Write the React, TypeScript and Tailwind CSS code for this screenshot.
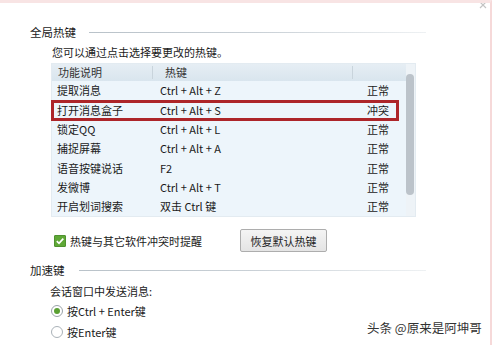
import React from "react";

const rows: { name: string; key: string; status: string; hot?: boolean }[] = [
  { name: "提取消息", key: "Ctrl + Alt + Z", status: "正常" },
  { name: "打开消息盒子", key: "Ctrl + Alt + S", status: "冲突", hot: true },
  { name: "锁定QQ", key: "Ctrl + Alt + L", status: "正常" },
  { name: "捕捉屏幕", key: "Ctrl + Alt + A", status: "正常" },
  { name: "语音按键说话", key: "F2", status: "正常" },
  { name: "发微博", key: "Ctrl + Alt + T", status: "正常" },
  { name: "开启划词搜索", key: "双击 Ctrl 键", status: "正常" },
];

export default function App() {
  return (
    <div
      className="relative w-[492px] h-[345px] overflow-hidden bg-white border-t-[3px] border-t-[#f8e4e4] border-r-2 border-r-[#f6d9d9] text-[11px] leading-[14px] text-[#1a1a1a]"
      style={{ fontFamily: '"Noto Sans CJK SC", "Noto Sans", sans-serif' }}
    >
      <svg className="absolute right-[3px] top-[-2px]" width="8" height="8" viewBox="0 0 8 8">
        <path d="M1 1 L7 7 M7 1 L1 7" stroke="#c4c4c4" strokeWidth="1.2" />
      </svg>

      {/* 全局热键 header */}
      <div className="mt-[22px] flex items-center pl-[30px]">
        <span className="text-[11.5px]">全局热键</span>
        <div className="ml-[13px] h-px w-[337px] bg-gradient-to-r from-[#b9c2c9] via-[#c9d0d6] to-[#eef1f3]" />
      </div>

      <div className="mt-[6px] pl-[52px] text-[11px]">您可以通过点击选择要更改的热键。</div>

      {/* table */}
      <div className="mt-[4px] ml-[51px] flex h-[154px] w-[365px] bg-[#edf5fb] border border-[#e3ebf1]">
        <div className="flex w-[355px] flex-col">
          <div className="flex h-[17px] items-center bg-gradient-to-b from-[#e6eef4] to-[#d9e5ee] text-[#333]">
            <div className="w-[101px] pl-[6px] border-r border-[#c9d4dc] h-[13px] leading-[13px]">功能说明</div>
            <div className="w-[200px] pl-[12px] border-r border-[#c9d4dc] h-[13px] leading-[13px]">热键</div>
            <div className="flex-1" />
          </div>
          {rows.map((r) => (
            <div key={r.name} className="relative flex h-[19.5px] items-center">
              <div className="w-[102px] pl-[5px]">{r.name}</div>
              <div className="w-[213px] pl-[6px]">{r.key}</div>
              <div className="flex-1">{r.status}</div>
              {r.hot && (
                <div className="absolute left-[-1px] right-[7px] top-[0px] bottom-[-2px] border-[3px] border-[#ad2529]" />
              )}
            </div>
          ))}
        </div>
        <div className="flex w-[9px] flex-col bg-[#eef3f7] pt-[10px]">
          <div className="h-[121px] w-[8px] rounded-[4px] bg-[#bcc3ca]" />
        </div>
      </div>

      {/* checkbox + button */}
      <div className="mt-[12px] flex h-[23px] items-center pl-[54px]">
        <div className="flex h-[12px] w-[12px] items-center justify-center rounded-[1px] bg-[#5fa836] border border-[#4f9230]">
          <svg width="10" height="10" viewBox="0 0 10 10">
            <path d="M1.8 5.2 L4 7.3 L8.3 2.6" stroke="white" strokeWidth="1.7" fill="none" />
          </svg>
        </div>
        <span className="ml-[4px]">热键与其它软件冲突时提醒</span>
        <button className="ml-[38px] h-[23px] w-[87px] rounded-[2px] border border-[#adadad] bg-gradient-to-b from-[#f4f4f4] to-[#e4e4e4] text-[11px] text-[#222]">
          恢复默认热键
        </button>
      </div>

      {/* 加速键 header */}
      <div className="mt-[11px] flex items-center pl-[30px]">
        <span className="text-[11.5px]">加速键</span>
        <div className="ml-[14px] h-px w-[347px] bg-gradient-to-r from-[#b9c2c9] via-[#c9d0d6] to-[#eef1f3]" />
      </div>

      <div className="mt-[7px] pl-[50px]">会话窗口中发送消息:</div>

      <div className="mt-[6px] flex items-center pl-[51px]">
        <div className="flex h-[12px] w-[12px] items-center justify-center rounded-full border border-[#9aa3a9] bg-white">
          <div className="h-[6px] w-[6px] rounded-full bg-[#5aa032]" />
        </div>
        <span className="ml-[4px]">按Ctrl + Enter键</span>
      </div>

      <div className="mt-[7px] flex items-center pl-[51px]">
        <div className="h-[12px] w-[12px] rounded-full border border-[#aab2b8] bg-white" />
        <span className="ml-[4px]">按Enter键</span>
      </div>

      <div
        className="absolute left-[367px] top-[316px] text-[12.5px] leading-[18px] text-[#333]"
        style={{ textShadow: "0 0 2px #fff, 0 0 2px #fff" }}
      >
        头条 @原来是阿坤哥
      </div>
    </div>
  );
}
